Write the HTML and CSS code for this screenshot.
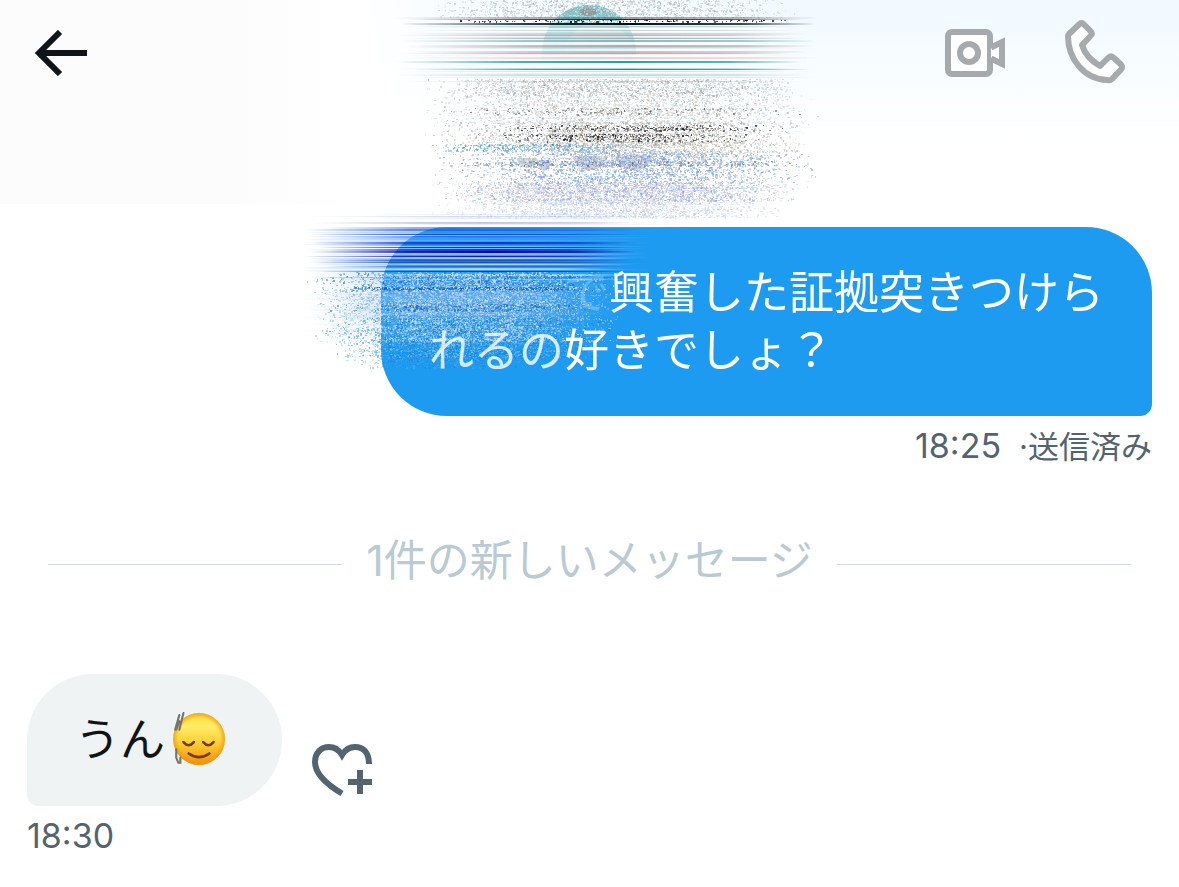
FILE: index.html
```html
<!DOCTYPE html>
<html lang="ja">
<head>
    <meta charset="UTF-8">
    <meta name="viewport" content="width=device-width, initial-scale=1.0">
    <title>メッセージ</title>
    <link rel="stylesheet" href="styles.css">
</head>
<body>
    <header class="topbar">
        <button class="icon-btn back" type="button" aria-label="戻る">
            <svg width="54" height="46" viewBox="0 0 54 46" fill="none" stroke="#0f141a" stroke-width="6">
                <path d="M26 2 5 23l21 21M5 23h48"/>
            </svg>
        </button>
        <div class="calls">
            <button class="icon-btn" type="button" aria-label="ビデオ通話">
                <svg width="60" height="64" viewBox="0 0 60 64" fill="none" stroke="#a7aaad" stroke-width="6">
                    <rect x="3" y="12" width="42" height="42" rx="4" fill="#fff"/>
                    <circle cx="24" cy="33" r="9"/>
                    <path d="M46 27.500 57 22v22l-11-5.500" fill="#fff"/>
                </svg>
            </button>
            <button class="icon-btn" type="button" aria-label="音声通話">
                <svg width="60" height="64" viewBox="0 0 60 64" fill="none" stroke="#a7aaad" stroke-width="6" stroke-linejoin="round">
                    <path d="M14 4.500Q16.500 2 19 4.500L25.500 11Q28 13.500 25.500 16L17 25Q21 38 35 46L43 38Q46 35 49 38L56 44.500Q58 47 56 49.500L47 59Q45 61 42 60C19 59 3 39 3 16Q3 15 4 14Z" fill="#fff"/>
                </svg>
            </button>
        </div>
    </header>

    <main class="thread">
        <section class="sent">
            <p class="bubble bubble-sent"><span class="bubble-text"><span class="hidden-char">で</span>興奮した証拠突きつけら<br><span class="faded">れるの</span>好きでしょ？</span></p>
            <div class="meta"><time>18:25</time><span class="status">·送信済み</span></div>
        </section>

        <div class="divider">1件の新しいメッセージ</div>

        <section class="received">
            <div class="row">
                <p class="bubble bubble-received">うん<svg class="emoji" role="img" aria-label="目を閉じた顔" width="56" height="56" viewBox="0 0 54 54">
                        <defs>
                            <linearGradient id="face" x1="0" y1="0" x2="0" y2="1">
                                <stop offset="0" stop-color="#fdda35"/>
                                <stop offset=".25" stop-color="#ffee68"/>
                                <stop offset=".6" stop-color="#fdcc32"/>
                                <stop offset="1" stop-color="#f38b0b"/>
                            </linearGradient>
                            <radialGradient id="rim">
                                <stop offset=".8" stop-color="#f59a10" stop-opacity="0"/>
                                <stop offset="1" stop-color="#ef950c" stop-opacity=".8"/>
                            </radialGradient>
                        </defs>
                        <circle cx="28" cy="26" r="25" fill="url(#face)"/>
                        <circle cx="28" cy="26" r="25" fill="url(#rim)"/>
                        <g fill="none" stroke="#743e10" stroke-width="2.500" stroke-linecap="round">
                            <path d="M13 29q5 6 10 0M32 29q5 6 10 0M18 40q10 7 20 0"/>
                        </g>
                        <g fill="none" stroke="#74746e" stroke-width="2" stroke-linecap="round">
                            <path d="M9 3 5 17M13 1l-4 16M6 17l3-8M6 36v8l2 5h2v-5"/>
                        </g>
                    </svg></p>
                <button class="icon-btn react" type="button" aria-label="リアクションを追加">
                    <svg width="60" height="54" viewBox="0 0 60 54" fill="none" stroke="#536471" stroke-width="6">
                        <path d="M57 20C57 8 51 3 43 3 37 3 33 6 30 11 27 6 23 3 17 3 9 3 3 9 3 18c0 11 11 22 27 31.500M48 26v24M36 38h24"/>
                    </svg>
                </button>
            </div>
            <div class="meta"><time>18:30</time></div>
        </section>
    </main>

    <canvas class="glitch" id="glitch" width="560" height="380"></canvas>
    <script src="glitch.js"></script>
</body>
</html>
```
FILE: styles.css
```css
* {
    box-sizing: border-box;
}
body {
    position: relative;
    margin: 0;
    background: #fff;
    color: #0f1419;
    font-family: Inter, "Noto Sans CJK JP", sans-serif;
    overflow-x: hidden;
}
p {
    margin: 0;
}
.icon-btn {
    padding: 0;
    border: 0;
    background: none;
    cursor: pointer;
}
.icon-btn svg {
    display: block;
}

/* header */
.topbar {
    display: flex;
    justify-content: space-between;
    align-items: flex-start;
    height: 204px;
    padding: 20px 54px 0 34px;
    background:
        linear-gradient(to right, #fcfcfc 20%, #fff 30%, rgba(255, 255, 255, 0) 45%),
        linear-gradient(to bottom, #f1faff, #fff 70%);
}
.back {
    margin-top: 10px;
}
.calls {
    display: flex;
    gap: 60px;
}

/* messages */
.thread {
    padding: 23px 27px;
}
.bubble {
    font-size: 45px;
    line-height: 58px;
    padding: 37px 48px 36px;
}
.sent {
    display: flex;
    flex-direction: column;
    align-items: flex-end;
}
.bubble-sent {
    background: #1d9bf0;
    color: #fff;
    border-radius: 66px 66px 12px 66px;
    text-indent: 3em;
}
.bubble-text {
    position: relative;
    z-index: 2;
}
.hidden-char {
    opacity: 0.25;
}
.faded {
    opacity: 0.8;
}
.meta {
    display: flex;
    align-items: baseline;
    gap: 18px;
    height: 60px;
    color: #536471;
    font-size: 34px;
    line-height: 60px;
}
.status {
    font-size: 31px;
}
.divider {
    display: flex;
    align-items: center;
    gap: 24px;
    margin: 48px 21px 0;
    height: 72px;
    color: #b9cad3;
    font-size: 43px;
    line-height: 72px;
}
.divider::before,
.divider::after {
    content: "";
    flex: 1;
    height: 1px;
    margin-top: 8px;
    background: #cfd9de;
}
.received {
    margin-top: 78px;
}
.row {
    display: flex;
    align-items: flex-end;
    gap: 30px;
}
.bubble-received {
    display: flex;
    align-items: center;
    padding: 37px 56px 37px 48px;
    background: #eff3f4;
    border-radius: 66px 66px 66px 12px;
}
.bubble-received .emoji {
    margin-left: 5px;
}
.react {
    margin-bottom: 8px;
}

/* noise over the name and the start of the message */
.glitch {
    position: absolute;
    top: 0;
    left: 300px;
    z-index: 1;
    pointer-events: none;
}
```
FILE: glitch.js
```js
const canvas = document.getElementById("glitch");
const ctx = canvas.getContext("2d");
ctx.translate(-300, 0);

let seed = 7;
function rand() {
    seed = (seed * 1664525 + 1013904223) % 4294967296;
    return seed / 4294967296;
}

function clamp(v) {
    return Math.max(0, Math.min(1, v));
}

// horizontal line that fades out at both ends
function streak(y, h, color, alpha, x0, x1) {
    const g = ctx.createLinearGradient(x0, 0, x1, 0);
    g.addColorStop(0, `rgba(${color},0)`);
    g.addColorStop(0.12, `rgba(${color},${alpha * 0.3})`);
    g.addColorStop(0.3, `rgba(${color},${alpha * 0.8})`);
    g.addColorStop(0.55, `rgba(${color},${alpha})`);
    g.addColorStop(0.82, `rgba(${color},${alpha * 0.75})`);
    g.addColorStop(1, `rgba(${color},0)`);
    ctx.fillStyle = g;
    ctx.fillRect(x0, y, x1 - x0, h);
}

// random specks, denser towards the middle of the band
function noise(x0, x1, y0, y1, density, alpha, colors, edge) {
    for (let y = y0; y < y1; y++) {
        const row = 0.6 + rand() * 0.8;
        const left = x0 + rand() * 20;
        const right = x1 - rand() * 20;
        for (let x = Math.floor(left); x < right; x++) {
            const env = clamp(Math.min((x - left) / edge, (right - x) / edge));
            if (rand() < density * env * row) {
                const c = colors[Math.floor(rand() * colors.length)];
                ctx.fillStyle = `rgba(${c},${alpha * (0.3 + env * 0.2 + rand() * 0.5)})`;
                ctx.fillRect(x, y, rand() < 0.5 ? 2 : 1, rand() < 0.35 ? 2 : 1);
            }
        }
    }
}

// soft rows of colour under the specks, fading over the last `fade` rows
function wash(y0, y1, colors, alpha, x0, x1, fade) {
    for (let y = y0; y < y1; y++) {
        const c = colors[Math.floor(rand() * colors.length)];
        const a = alpha * (0.6 + rand() * 0.4) * clamp((y1 - y) / fade);
        const l = x0 + rand() * 25;
        const g = ctx.createLinearGradient(l, 0, x1, 0);
        g.addColorStop(0, `rgba(${c},0)`);
        g.addColorStop(0.3, `rgba(${c},${a})`);
        g.addColorStop(0.65, `rgba(${c},${a * 0.8})`);
        g.addColorStop(1, `rgba(${c},0)`);
        ctx.fillStyle = g;
        ctx.fillRect(l, y, x1 - l, 1);
    }
}

// avatar
const av = ctx.createLinearGradient(0, 5, 0, 66);
av.addColorStop(0, "rgba(110,190,200,0.95)");
av.addColorStop(0.5, "rgba(140,210,220,0.8)");
av.addColorStop(1, "rgba(170,225,230,0)");
ctx.fillStyle = av;
ctx.beginPath();
ctx.arc(589, 52, 47, 0, Math.PI * 2);
ctx.fill();
const inner = ctx.createLinearGradient(0, 20, 0, 60);
inner.addColorStop(0, "rgba(205,205,207,0.9)");
inner.addColorStop(1, "rgba(255,255,255,0)");
ctx.fillStyle = inner;
ctx.beginPath();
ctx.ellipse(599, 57, 35, 35, 0, Math.PI, Math.PI * 2);
ctx.fill();
ctx.fillStyle = "rgba(150,130,132,0.7)";
ctx.beginPath();
ctx.ellipse(588, 12, 9, 4, 0, 0, Math.PI * 2);
ctx.fill();

noise(420, 800, 0, 18, 0.4, 0.5, ["150,160,162", "190,185,180", "255,255,255"], 90);
wash(24, 80, ["185,215,220", "235,225,228", "225,240,242", "255,255,255", "255,255,255"], 0.6, 400, 815, 5);

// streaks across the avatar
[
    [17, 2, "80,70,72", 0.5], [19, 1, "10,20,22", 0.9],
    [23, 2, "5,12,14", 1], [26, 1, "110,175,180", 0.5], [28, 2, "255,255,255", 0.7],
    [30, 1, "160,170,175", 0.5], [33, 2, "180,150,150", 0.5], [35, 1, "70,165,175", 0.6],
    [38, 1, "130,130,135", 0.6], [40, 2, "90,160,165", 0.7], [42, 2, "255,255,255", 0.7],
    [45, 2, "125,100,102", 0.5], [47, 1, "180,170,175", 0.5], [51, 2, "170,125,120", 0.5],
    [53, 1, "70,165,175", 0.7], [55, 2, "255,255,255", 0.8], [57, 2, "200,175,175", 0.5],
    [61, 2, "20,155,170", 0.95], [63, 4, "255,255,255", 0.9], [68, 1, "120,200,205", 0.7],
    [69, 1, "0,145,155", 1], [71, 1, "160,220,225", 0.6], [74, 2, "150,210,215", 0.6],
    [77, 1, "175,210,215", 0.5], [81, 1, "150,205,208", 0.6]
].forEach(([y, h, color, alpha], i) => streak(y, h, color, alpha, 395 + (i * 13) % 22, 820 - (i * 17) % 30));

noise(430, 810, 20, 22, 0.7, 1, ["255,255,255", "255,255,255", "20,25,25"], 60);

// bottom edge of the name
ctx.fillStyle = "rgba(185,187,190,0.7)";
[[527, 158, 10, 10], [544, 160, 7, 11], [590, 156, 17, 14], [634, 156, 18, 14]].forEach(([x, y, rx, ry]) => {
    ctx.beginPath();
    ctx.ellipse(x, y, rx, ry, 0, 0, Math.PI);
    ctx.fill();
});

const greys = ["185,185,185", "205,195,185", "150,150,150", "190,215,218", "255,255,255"];
const darks = ["30,30,35", "120,110,100", "80,80,85", "190,180,165", "255,255,255"];
noise(415, 815, 79, 96, 0.42, 0.65, greys, 110);
noise(410, 825, 96, 124, 0.28, 0.55, greys, 120);
noise(435, 810, 108, 115, 0.22, 0.65, darks, 180);
noise(420, 820, 122, 146, 0.45, 0.65, greys, 130);
noise(480, 800, 125, 131, 0.4, 0.95, darks, 120);
noise(470, 780, 134, 142, 0.42, 0.95, darks, 130);
noise(415, 660, 144, 151, 0.5, 0.75, ["45,130,220", "90,170,235", "140,180,220", "255,255,255"], 60);
noise(520, 820, 142, 158, 0.4, 0.6, ["175,170,155", "200,195,175", "150,160,165", "255,255,255"], 100);
noise(420, 815, 161, 166, 0.35, 0.7, ["60,70,90", "150,160,180", "110,145,190", "220,220,220"], 120);
const blues = ["90,140,225", "110,175,240", "130,130,215", "185,205,245", "255,255,255"];
noise(425, 825, 151, 184, 0.42, 0.65, blues, 140);
noise(425, 815, 182, 201, 0.5, 0.55, ["140,135,210", "180,180,225", "120,170,235", "215,215,250"], 110);
noise(425, 795, 201, 218, 0.4, 0.4, ["150,150,215", "150,200,245", "190,190,235"], 130);

// streaks over the top of the bubble
wash(214, 228, ["190,200,240", "225,228,250", "255,255,255"], 0.4, 350, 690, 1);
wash(228, 273, ["60,140,240", "120,185,250", "70,160,245", "200,225,252", "30,95,225"], 0.75, 300, 650, 1);
[
    [216, 1, "170,190,240", 0.4], [222, 2, "110,125,225", 0.4],
    [227, 1, "45,105,205", 0.6], [230, 1, "20,65,205", 0.6],
    [234, 1, "10,65,200", 0.7], [237, 1, "35,110,230", 0.8],
    [242, 2, "0,35,200", 0.9], [247, 1, "20,10,190", 0.8],
    [249, 2, "40,20,205", 0.85], [251, 2, "0,0,170", 0.95], [254, 1, "120,190,250", 0.6],
    [256, 1, "10,10,175", 0.9], [258, 1, "190,225,250", 0.8], [260, 1, "20,80,190", 0.8],
    [262, 1, "35,75,130", 0.8], [264, 1, "180,220,250", 0.9], [266, 1, "20,90,210", 0.8],
    [268, 2, "215,235,255", 0.7], [271, 1, "0,50,190", 1], [274, 2, "235,245,255", 0.9],
    [277, 1, "0,100,210", 0.9], [279, 1, "190,220,250", 0.8]
].forEach(([y, h, color, alpha], i) => streak(y, h, color, alpha, 302 + (i * 11) % 30, 640 - (i * 7) % 20));

wash(273, 352, ["150,190,242", "175,205,245", "120,180,240"], 0.6, 300, 625, 40);
const mixed = ["20,110,205", "90,165,235", "200,220,248", "225,235,250", "50,135,220"];
noise(300, 635, 272, 290, 0.5, 0.75, mixed, 110);
noise(335, 605, 287, 291, 0.5, 0.9, ["10,90,195", "35,120,215", "215,230,250"], 50);
noise(300, 630, 290, 318, 0.65, 0.6, ["150,190,240", "215,225,250", "80,150,230", "105,175,235", "235,240,252"], 110);
noise(320, 610, 304, 311, 0.35, 0.7, ["15,105,190", "35,100,180", "220,230,250"], 90);
noise(305, 630, 318, 342, 0.65, 0.65, ["150,195,240", "60,150,230", "20,120,205", "195,215,245", "235,242,252"], 110);
noise(320, 610, 342, 358, 0.5, 0.55, ["110,175,235", "35,115,200", "165,205,240", "20,140,225"], 100);
noise(335, 550, 358, 368, 0.3, 0.45, ["100,170,230", "40,120,205"], 80);
```
